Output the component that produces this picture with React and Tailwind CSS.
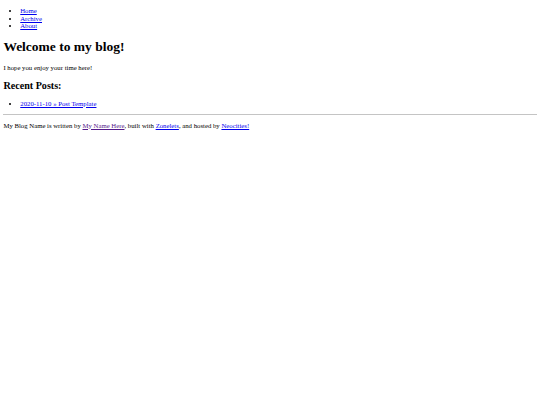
export default function App() {
  const link = 'text-[#0000EE] underline';
  return (
    <div
      className="min-h-screen bg-white px-[3.375px] pt-[6.75px] text-black text-[6.75px] leading-[1.15]"
      style={{ fontFamily: '"Liberation Serif", "Times New Roman", serif' }}
    >
      <ul className="list-disc pl-[16.875px]">
        <li><a href="#" className={link}>Home</a></li>
        <li><a href="#" className={link}>Archive</a></li>
        <li><a href="#" className={link}>About</a></li>
      </ul>
      <h1 className="mt-[9.045px] text-[13.5px] font-bold leading-[1.15]">Welcome to my blog!</h1>
      <p className="mt-[9.045px]">I hope you enjoy your time here!</p>
      <h2 className="mt-[8.404px] text-[10.125px] font-bold leading-[1.15]">Recent Posts:</h2>
      <ul className="mt-[8.404px] list-disc pl-[16.875px]">
        <li><a href="#" className={link}>2020-11-10 » Post Template</a></li>
      </ul>
      <hr className="mt-[6.75px] border-0 border-t border-t-[#c4c4c4]" />
      <p className="mt-[6.6px]">
        My Blog Name is written by <a href="#" className="text-[#551A8B] underline">My Name Here</a>, built with{' '}
        <a href="#" className={link}>Zonelets</a>, and hosted by <a href="#" className={link}>Neocities!</a>
      </p>
    </div>
  );
}
